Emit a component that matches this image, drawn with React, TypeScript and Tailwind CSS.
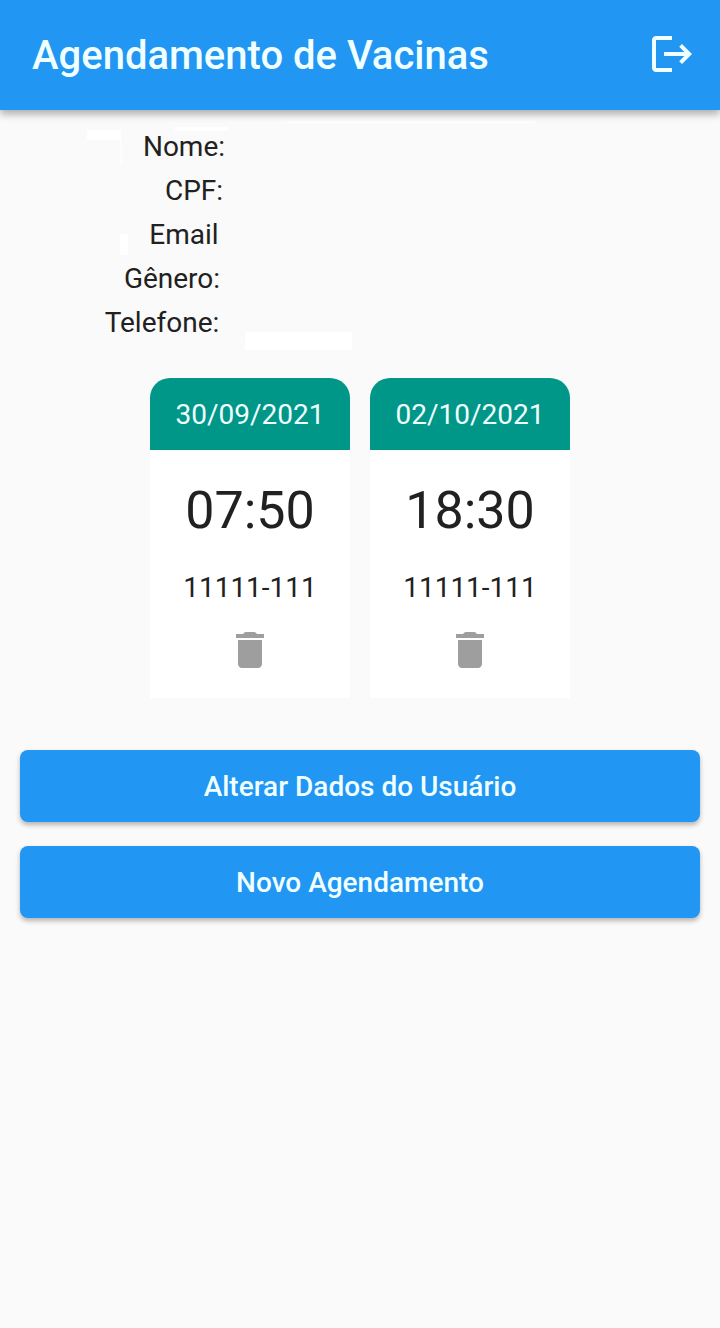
type ProfileField = { label: string; valueWidth: string };
type Appointment = { date: string; time: string; postalCode: string };

const profileFields: ProfileField[] = [
  { label: "Nome:", valueWidth: "w-[352px]" },
  { label: "CPF:", valueWidth: "w-[332px]" },
  { label: "Email", valueWidth: "w-[352px]" },
  { label: "Gênero:", valueWidth: "w-[376px]" },
  { label: "Telefone:", valueWidth: "w-[396px]" },
];

const appointments: Appointment[] = [
  { date: "30/09/2021", time: "07:50", postalCode: "11111-111" },
  { date: "02/10/2021", time: "18:30", postalCode: "11111-111" },
];

function LogoutIcon() {
  return (
    <svg viewBox="0 0 24 24" className="size-12 fill-current" aria-hidden="true">
      <path d="M17 7l-1.41 1.41L18.17 11H8v2h10.17l-2.58 2.58L17 17l5-5zM4 5h8V3H4c-1.1 0-2 .9-2 2v14c0 1.1.9 2 2 2h8v-2H4V5z" />
    </svg>
  );
}

function TrashIcon() {
  return (
    <svg viewBox="0 0 24 24" className="size-12 fill-current" aria-hidden="true">
      <path d="M6 19c0 1.1.9 2 2 2h8c1.1 0 2-.9 2-2V7H6v12zM18 4h-2.5l-.71-.71c-.18-.18-.44-.29-.7-.29H9.91c-.26 0-.52.11-.7.29L8.5 4H5v2h14V4z" />
    </svg>
  );
}

function AppBar() {
  return (
    <header className="flex items-start justify-between bg-[#2196f3] pt-[30px] pr-6 pb-7 pl-8 text-[#f0ffff] shadow-[0_4px_8px_rgba(0,0,0,0.32)]">
      <h1 className="text-[40px] leading-[52px] font-medium">Agendamento de Vacinas</h1>
      <button type="button" aria-label="Sair" className="flex">
        <LogoutIcon />
      </button>
    </header>
  );
}

function Profile() {
  return (
    <section className="relative pt-[15px]">
      <div className="absolute top-[12px] left-[228px] h-3 w-[307px] bg-[#fafafa]" />
      <div className="absolute top-[11px] left-[287px] h-[3px] w-[248px] bg-[#fcfcfc]" />
      <div className="absolute top-[20px] left-[87px] h-[10px] w-[34px] bg-white" />
      <div className="absolute top-[30px] left-[120px] h-6 w-[2px] bg-[#fdfdfd]" />
      <div className="absolute top-[17px] left-[175px] h-1 w-[53px] bg-white" />
      <div className="absolute top-[124px] left-[120px] h-[21px] w-2 bg-white" />
      <div className="absolute top-[222px] left-[245px] h-[18px] w-[107px] bg-white" />
      <dl className="relative text-[28px] leading-[44px]">
        {profileFields.map((field) => (
          <div key={field.label} className="flex justify-center">
            <dt>{field.label}</dt>
            <dd className={field.valueWidth} />
          </div>
        ))}
      </dl>
    </section>
  );
}

function AppointmentCard({ date, time, postalCode }: Appointment) {
  return (
    <article className="w-[200px] overflow-hidden rounded-t-[20px] bg-white text-center">
      <h2 className="bg-[#009688] pt-[17px] pb-[15px] text-[28px] leading-[40px] text-[#f0ffff]">{date}</h2>
      <div className="flex flex-col items-center pt-[31px] pb-6">
        <p className="text-[52px] leading-[60px]">{time}</p>
        <p className="mt-[31px] text-[28px] leading-[32px]">{postalCode}</p>
        <button type="button" aria-label="Excluir agendamento" className="mt-[22px] text-[#9e9e9e]">
          <TrashIcon />
        </button>
      </div>
    </article>
  );
}

function ActionButton({ label }: { label: string }) {
  return (
    <button
      type="button"
      className="w-full rounded-lg bg-[#2196f3] pt-[17px] pb-[15px] text-[28px] leading-[40px] font-medium text-[#f0ffff] shadow-[0_3px_5px_rgba(0,0,0,0.28)]"
    >
      {label}
    </button>
  );
}

export default function App() {
  return (
    <div className="min-h-screen bg-[#fafafa] font-['Roboto',sans-serif] text-[#212121]">
      <AppBar />
      <main>
        <Profile />
        <section className="mt-[33px] flex flex-wrap justify-center gap-5">
          {appointments.map((appointment) => (
            <AppointmentCard key={appointment.date} {...appointment} />
          ))}
        </section>
        <div className="mt-[52px] flex flex-col gap-6 px-5">
          <ActionButton label="Alterar Dados do Usuário" />
          <ActionButton label="Novo Agendamento" />
        </div>
      </main>
    </div>
  );
}
